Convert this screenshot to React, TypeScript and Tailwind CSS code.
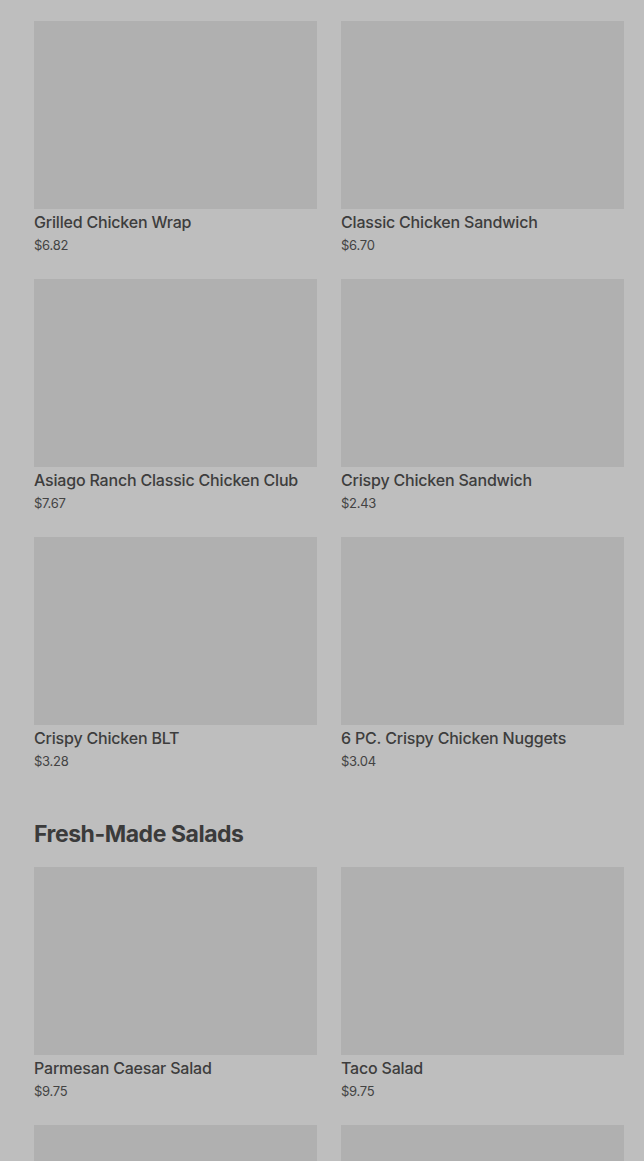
const SECTIONS = [
  {
    title: null as string | null,
    items: [
      { name: 'Grilled Chicken Wrap', price: '$6.82' },
      { name: 'Classic Chicken Sandwich', price: '$6.70' },
      { name: 'Asiago Ranch Classic Chicken Club', price: '$7.67' },
      { name: 'Crispy Chicken Sandwich', price: '$2.43' },
      { name: 'Crispy Chicken BLT', price: '$3.28' },
      { name: '6 PC. Crispy Chicken Nuggets', price: '$3.04' },
    ],
  },
  {
    title: 'Fresh-Made Salads',
    items: [
      { name: 'Parmesan Caesar Salad', price: '$9.75' },
      { name: 'Taco Salad', price: '$9.75' },
      { name: '', price: '' },
      { name: '', price: '' },
    ],
  },
]

function MenuCard({ name, price }: { name: string; price: string }) {
  return (
    <div className="flex flex-col">
      <div className="h-[188px] w-full bg-[#b0b0b0]" />
      {name && (
        <>
          <p className="mt-px text-[16px] leading-[24px] font-medium tracking-[-0.012em] text-[#3d3d3d] truncate">{name}</p>
          <p className="mt-px text-[13px] leading-[20px] tracking-[-0.02em] text-[#434343]">{price}</p>
        </>
      )}
    </div>
  )
}

export default function App() {
  return (
    <div
      className="h-screen bg-[#bebebe] pl-[34px] pr-[20px] pt-[21px] overflow-hidden"
      style={{ fontFamily: 'Inter, "Noto Sans", sans-serif' }}
    >
      {SECTIONS.map((s, i) => (
        <section key={i} className={i > 0 ? 'mt-[47px]' : ''}>
          {s.title && (
            <h2 className="mb-[17px] text-[23px] leading-[32px] font-bold tracking-[-0.02em] text-[#3b3b3b]">
              {s.title}
            </h2>
          )}
          <div className="grid grid-cols-2 gap-x-[24px] gap-y-[24px]">
            {s.items.map((it, j) => (
              <MenuCard key={j} {...it} />
            ))}
          </div>
        </section>
      ))}
    </div>
  )
}
